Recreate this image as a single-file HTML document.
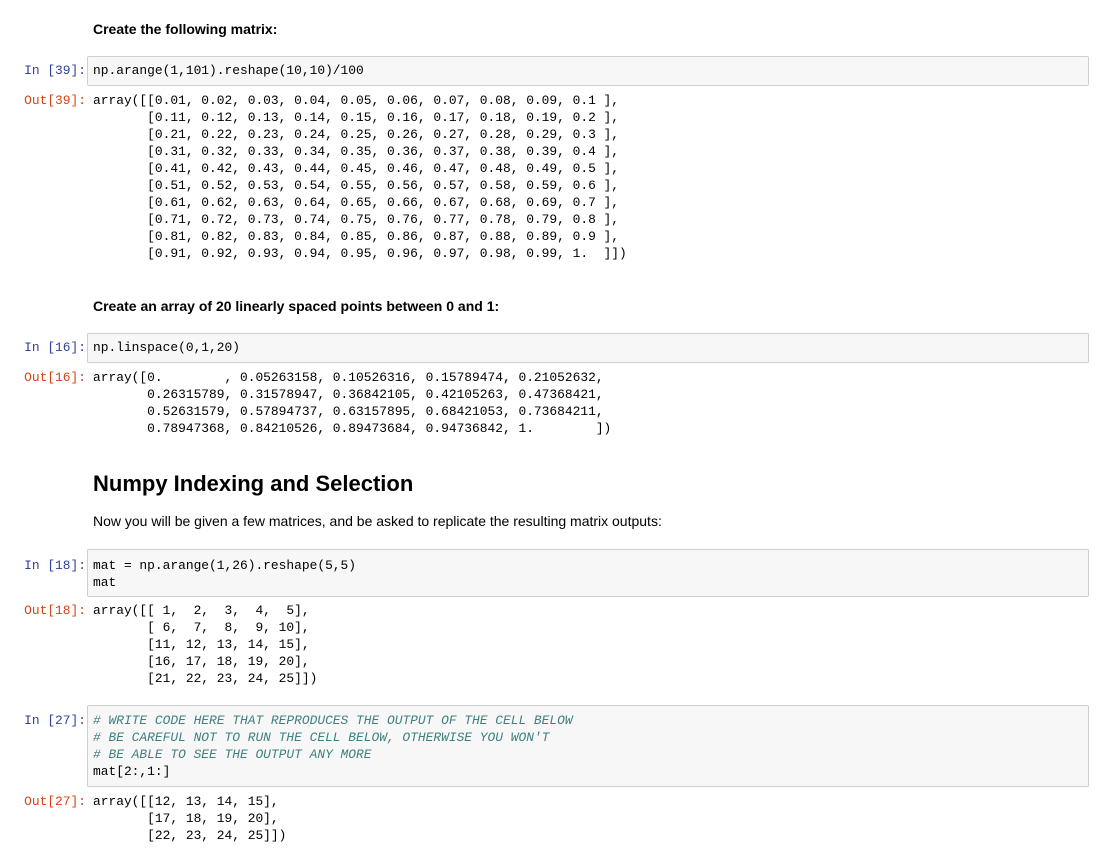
<!DOCTYPE html>
<html><head><meta charset="utf-8"><style>
body{margin:0;width:1100px;height:852px;background:#fff;position:relative;overflow:hidden;font-family:"Liberation Sans",Arial,sans-serif;color:#000}
.a{position:absolute;white-space:pre}
.m{font-family:"Liberation Mono",monospace;font-size:12.9px;line-height:17px;color:#000}
.pi{color:#303f9f;right:1014px;text-align:right}
.po{color:#d84315;right:1014px;text-align:right}
.box{position:absolute;left:87px;width:1000px;background:#f7f7f7;border:1px solid #cfcfcf;border-radius:2px}
.c{color:#408080;font-style:italic}
.b{font-weight:bold;font-size:14px;left:93px}
</style></head><body>
<div class="a b" style="top:21px">Create the following matrix:</div>
<div class="box" style="top:56px;height:28px"></div>
<div class="a m pi" style="top:62px">In [39]:</div>
<div class="a m" style="left:93px;top:62px">np.arange(1,101).reshape(10,10)/100</div>
<div class="a m po" style="top:92px">Out[39]:</div>
<div class="a m" style="left:93px;top:92px">array([[0.01, 0.02, 0.03, 0.04, 0.05, 0.06, 0.07, 0.08, 0.09, 0.1 ],
       [0.11, 0.12, 0.13, 0.14, 0.15, 0.16, 0.17, 0.18, 0.19, 0.2 ],
       [0.21, 0.22, 0.23, 0.24, 0.25, 0.26, 0.27, 0.28, 0.29, 0.3 ],
       [0.31, 0.32, 0.33, 0.34, 0.35, 0.36, 0.37, 0.38, 0.39, 0.4 ],
       [0.41, 0.42, 0.43, 0.44, 0.45, 0.46, 0.47, 0.48, 0.49, 0.5 ],
       [0.51, 0.52, 0.53, 0.54, 0.55, 0.56, 0.57, 0.58, 0.59, 0.6 ],
       [0.61, 0.62, 0.63, 0.64, 0.65, 0.66, 0.67, 0.68, 0.69, 0.7 ],
       [0.71, 0.72, 0.73, 0.74, 0.75, 0.76, 0.77, 0.78, 0.79, 0.8 ],
       [0.81, 0.82, 0.83, 0.84, 0.85, 0.86, 0.87, 0.88, 0.89, 0.9 ],
       [0.91, 0.92, 0.93, 0.94, 0.95, 0.96, 0.97, 0.98, 0.99, 1.  ]])</div>

<div class="a b" style="top:298px">Create an array of 20 linearly spaced points between 0 and 1:</div>
<div class="box" style="top:333px;height:28px"></div>
<div class="a m pi" style="top:339px">In [16]:</div>
<div class="a m" style="left:93px;top:339px">np.linspace(0,1,20)</div>
<div class="a m po" style="top:369px">Out[16]:</div>
<div class="a m" style="left:93px;top:369px">array([0.        , 0.05263158, 0.10526316, 0.15789474, 0.21052632,
       0.26315789, 0.31578947, 0.36842105, 0.42105263, 0.47368421,
       0.52631579, 0.57894737, 0.63157895, 0.68421053, 0.73684211,
       0.78947368, 0.84210526, 0.89473684, 0.94736842, 1.        ])</div>

<div class="a" style="left:93px;top:471px;font-size:22px;font-weight:bold">Numpy Indexing and Selection</div>
<div class="a" style="left:93px;top:513px;font-size:14px">Now you will be given a few matrices, and be asked to replicate the resulting matrix outputs:</div>

<div class="box" style="top:549px;height:46px"></div>
<div class="a m pi" style="top:557px">In [18]:</div>
<div class="a m" style="left:93px;top:557px">mat = np.arange(1,26).reshape(5,5)
mat</div>
<div class="a m po" style="top:602px">Out[18]:</div>
<div class="a m" style="left:93px;top:602px">array([[ 1,  2,  3,  4,  5],
       [ 6,  7,  8,  9, 10],
       [11, 12, 13, 14, 15],
       [16, 17, 18, 19, 20],
       [21, 22, 23, 24, 25]])</div>

<div class="box" style="top:705px;height:80px"></div>
<div class="a m pi" style="top:712px">In [27]:</div>
<div class="a m" style="left:93px;top:712px"><span class="c"># WRITE CODE HERE THAT REPRODUCES THE OUTPUT OF THE CELL BELOW
# BE CAREFUL NOT TO RUN THE CELL BELOW, OTHERWISE YOU WON'T
# BE ABLE TO SEE THE OUTPUT ANY MORE</span>
mat[2:,1:]</div>
<div class="a m po" style="top:793px">Out[27]:</div>
<div class="a m" style="left:93px;top:793px">array([[12, 13, 14, 15],
       [17, 18, 19, 20],
       [22, 23, 24, 25]])</div>
</body></html>
